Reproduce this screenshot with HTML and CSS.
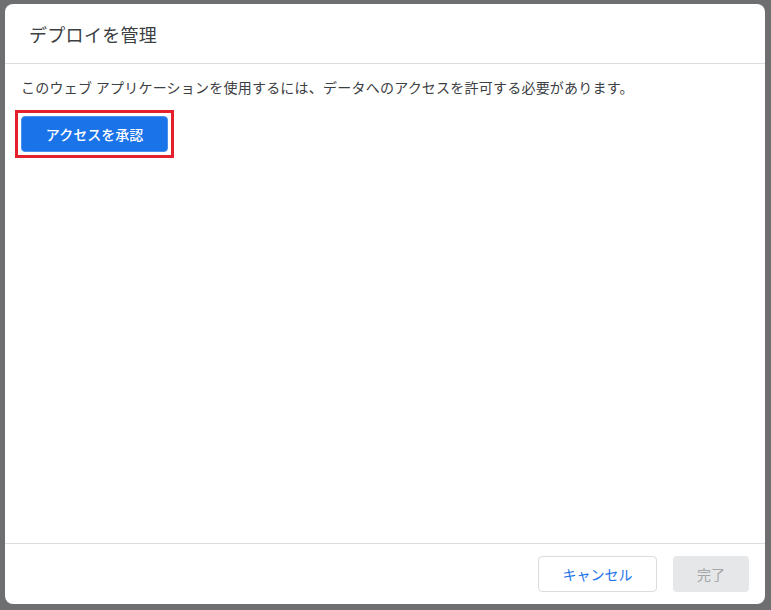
FILE: index.html
```html
<!DOCTYPE html>
<html lang="ja">
<head>
<meta charset="utf-8">
<title>デプロイを管理</title>
<link rel="stylesheet" href="styles.css">
</head>
<body>
<div class="dialog">
  <div class="dialog-header">
    <h1 class="dialog-title">デプロイを管理</h1>
  </div>
  <div class="dialog-body">
    <p class="message">このウェブ アプリケーションを使用するには、データへのアクセスを許可する必要があります。</p>
    <div class="highlight">
      <button class="btn-primary" type="button">アクセスを承認</button>
    </div>
  </div>
  <div class="dialog-footer">
    <button class="btn-outline" type="button">キャンセル</button>
    <button class="btn-disabled" type="button" disabled>完了</button>
  </div>
</div>
</body>
</html>
```
FILE: styles.css
```css
html, body {
  margin: 0;
  padding: 0;
  height: 100%;
}
body {
  background: #6e6f70;
  font-family: Roboto, "Noto Sans CJK JP", "Noto Sans", sans-serif;
  padding: 4px 6px 6px 5px;
  box-sizing: border-box;
  overflow: hidden;
}
.dialog {
  width: 760px;
  height: 600px;
  background: #ffffff;
  border-radius: 8px;
  display: flex;
  flex-direction: column;
  overflow: hidden;
}
.dialog-header {
  height: 60px;
  border-bottom: 1px solid #dadce0;
  display: flex;
  align-items: center;
  padding: 4px 24px 0 24px;
  box-sizing: border-box;
  flex-shrink: 0;
}
.dialog-title {
  margin: 0;
  font-size: 18px;
  font-weight: 400;
  color: #3c4043;
  line-height: 24px;
  letter-spacing: 0.3px;
}
.dialog-body {
  flex: 1;
  padding: 14px 16px;
}
.message {
  margin: 0;
  font-size: 14px;
  line-height: 20px;
  color: #3c4043;
  letter-spacing: 0.22px;
}
.highlight {
  width: fit-content;
  margin: 12px 0 0 -6px;
  border: 3px solid #e3202b;
  padding: 3px;
}
.btn-primary {
  width: 147px;
  height: 36px;
  background: #1a73e8;
  color: #ffffff;
  border: 1px solid #4a90ee;
  border-radius: 4px;
  font-family: inherit;
  font-size: 14px;
  font-weight: 500;
  display: block;
}
.dialog-footer {
  height: 61px;
  border-top: 1px solid #dadce0;
  display: flex;
  justify-content: flex-end;
  align-items: flex-start;
  gap: 16px;
  padding: 12px 16px 0 16px;
  box-sizing: border-box;
  flex-shrink: 0;
}
.btn-outline {
  width: 119px;
  height: 36px;
  background: #ffffff;
  border: 1px solid #dadce0;
  border-radius: 4px;
  color: #1a73e8;
  font-family: inherit;
  font-size: 14px;
}
.btn-disabled {
  width: 76px;
  height: 36px;
  background: #e6e7e8;
  border: none;
  border-radius: 4px;
  color: #a5a6a7;
  font-family: inherit;
  font-size: 14px;
}
```
